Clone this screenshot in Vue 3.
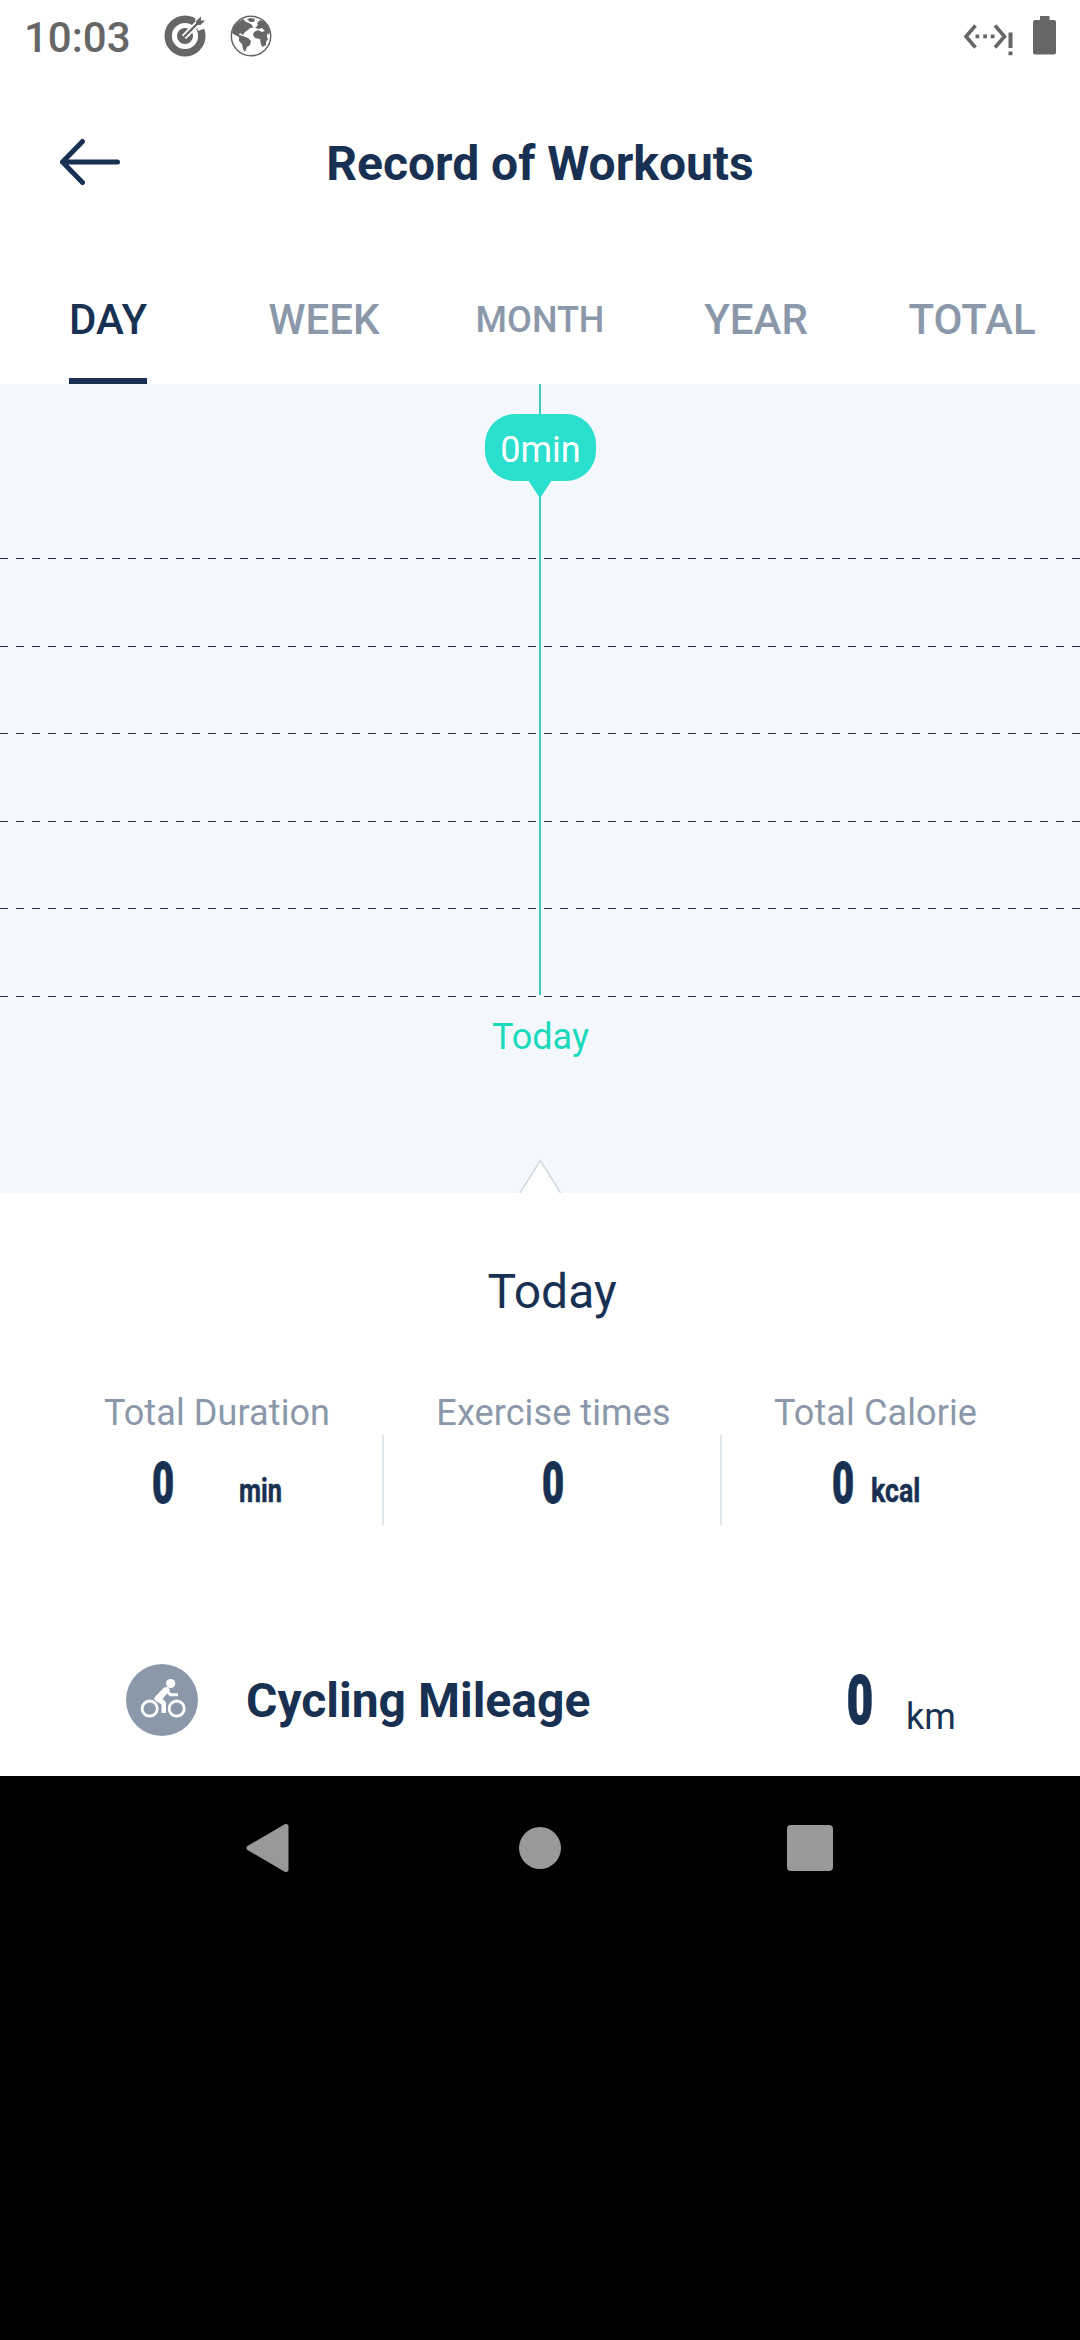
<script setup>
const tabs = ['DAY', 'WEEK', 'MONTH', 'YEAR', 'TOTAL']
const stats = [
  { key: 'duration', label: 'Total Duration', value: '0', unit: 'min' },
  { key: 'times', label: 'Exercise times', value: '0', unit: '' },
  { key: 'calorie', label: 'Total Calorie', value: '0', unit: 'kcal' },
]
</script>

<template>
  <div class="screen">
    <div class="status">
      <span class="clock">10:03</span>
      <svg class="target" width="42" height="42" viewBox="0 0 42 42">
        <circle cx="21" cy="21" r="16.8" fill="none" stroke="#666" stroke-width="7.4" />
        <circle cx="21" cy="21" r="8" fill="#666" />
        <path d="M20 22 35 7" stroke="#fff" stroke-width="6" />
        <path d="M31 4 42 0V13L34 16Z" fill="#fff" />
        <path d="M20 22 34 8" stroke="#666" stroke-width="2.4" />
        <path d="M32 10V6L37 1.500V5.500H41L36.500 10Z" fill="#666" />
      </svg>
      <svg class="globe" width="42" height="42" viewBox="0 0 42 42">
        <circle cx="21" cy="21" r="19.7" fill="#fff" stroke="#666" stroke-width="1.500" />
        <path fill="#666" d="M2 18 4 11 8 7 13 4 16 7 19 8 22 10 23 13 20 13 18 15 15 17 13 20 10 18 9 20 13 21 18 23 21 26 20 30 17 32 15 37 13 34 12 29 9 26 9 22 5 20ZM17 4 21 3 25 4 24 7 20 7ZM27 8 30 5 35 7 38 12 40 17 38 20 37 18 37 22 38 24 36 27 36 30 33 32 31 30 30 24 25 23 23 20 24 17 28 15 32 17 35 16 32 13 29 14 25 13 28 10Z" />
      </svg>
      <div class="grow"></div>
      <svg class="net" width="50" height="40" viewBox="0 0 50 40">
        <g fill="none" stroke="#666" stroke-width="3.600">
          <path d="M12.500 9.500 3 20.500 12.500 31.500M32 9.500 41.500 20.500 32 31.500" />
        </g>
        <path fill="#666" d="M12.500 18.500h3.800v3.800h-3.800ZM20.200 18.500h3.800v3.800h-3.800ZM27.800 18.500h3.800v3.800h-3.800ZM45.500 16.500h4v15.500h-4ZM45.500 35.500h4v3.800h-4Z" />
      </svg>
      <svg class="battery" width="23" height="39" viewBox="0 0 23 39">
        <path fill="#666" d="M7 0h9.500v4H21a2 2 0 0 1 2 2v30.500a2 2 0 0 1-2 2H2a2 2 0 0 1-2-2V6a2 2 0 0 1 2-2h5Z" />
      </svg>
    </div>

    <header class="header">
      <svg class="back" width="62" height="50" viewBox="0 0 62 50">
        <path d="M22.500 4.500 2.500 25 22.500 45.500M2.500 25H57.500" fill="none" stroke="#183153" stroke-width="5" stroke-linecap="round" />
      </svg>
      <h1><span class="title">Record of Workouts</span></h1>
      <div class="back-balance"></div>
    </header>

    <nav class="tabs">
      <div v-for="t in tabs" :key="t" class="tab" :class="{ active: t === 'DAY', small: t === 'MONTH' }">
        <span>{{ t }}</span>
      </div>
    </nav>

    <section class="chart">
      <div class="grid">
        <i v-for="n in 6" :key="n" class="gridline"></i>
      </div>
      <div class="day">Today</div>
      <div class="cursor"></div>
      <div class="bubble"><span>0min</span></div>
      <svg class="tail" width="24" height="18" viewBox="0 0 24 18"><path d="M0 0H24L12.500 17.500H11.500Z" fill="#2adfcd" /></svg>
      <svg class="notch" width="44" height="35" viewBox="0 0 44 35">
        <path d="M2 35 22.300 2.500 42.600 35" fill="#fff" stroke="#d3d8e2" stroke-width="1.500" />
      </svg>
    </section>

    <section class="summary">
      <h2>Today</h2>
      <div class="stats">
        <div v-for="s in stats" :key="s.key" class="stat" :class="s.key">
          <div class="label">{{ s.label }}</div>
          <div class="figures">
            <span class="num">{{ s.value }}</span>
            <span v-if="s.unit" class="unit"><b>{{ s.unit }}</b></span>
          </div>
        </div>
      </div>
      <div class="mileage">
        <svg width="72" height="72" viewBox="0 0 72 72">
          <circle cx="36" cy="36" r="36" fill="#8b98aa" />
          <g fill="none" stroke="#fff" stroke-width="2.800">
            <circle cx="23.700" cy="44.600" r="7.600" />
            <circle cx="50.700" cy="44.600" r="7.600" />
            <path d="M42 25 31.500 35.500 37.500 39.500V49" stroke-width="4" stroke-linejoin="round" />
            <path d="M39 25 44.500 30.800H52" stroke-width="3" />
          </g>
          <path fill="#fff" d="M38 23.500 42 23 44 26 39 32 36.500 35 40 38V49H36V40L29 36.500 28 34Z" />
          <circle cx="44.700" cy="19.500" r="4.600" fill="#fff" />
        </svg>
        <span class="name">Cycling Mileage</span>
        <span class="km-num">0</span>
        <span class="km">km</span>
      </div>
    </section>

    <footer class="navbar">
      <svg width="216" height="60" viewBox="0 0 216 60"><path d="M124 8.500 87 30 124 51.500Z" class="nav-tri" /></svg>
      <svg width="216" height="60" viewBox="0 0 216 60"><circle cx="108" cy="30" r="21" fill="#999" /></svg>
      <svg width="216" height="60" viewBox="0 0 216 60"><rect x="85" y="7" width="46" height="46" rx="4" fill="#999" /></svg>
    </footer>
  </div>
</template>

<style>
body {
  margin: 0;
  background: #000;
}
</style>

<style scoped>
.screen {
  width: 1080px;
  height: 2340px;
  display: flex;
  flex-direction: column;
  overflow: hidden;
  background: #000;
  color: #183153;
  font-family: Roboto, sans-serif;
}
svg {
  display: block;
  flex: none;
}
.status {
  height: 72px;
  box-sizing: border-box;
  display: flex;
  align-items: flex-start;
  padding: 0 24px 0 24px;
  background: #fff;
}
.clock {
  width: 140px;
  line-height: 75px;
  font-size: 42px;
  font-weight: 500;
  color: #666;
}
.target { margin-top: 15px; }
.globe { margin: 15px 0 0 24px; }
.grow { flex: 1; }
.net { margin: 16px 20px 0 0; }
.battery { margin-top: 16px; }
.header {
  height: 183px;
  display: flex;
  align-items: center;
  background: #fff;
}
.back { margin: 0 98px 3px 60px; }
.back-balance { width: 220px; }
h1 {
  flex: 1;
  margin: 0;
  text-align: center;
  font-size: 48px;
  font-weight: 700;
  white-space: nowrap;
}
.tabs {
  height: 129px;
  display: grid;
  grid-template-columns: repeat(5, 216px);
  background: #fff;
}
.tab {
  display: flex;
  justify-content: center;
  font-size: 42px;
  font-weight: 500;
  line-height: 129px;
  color: #8b98aa;
}
.small {
  font-size: 36px;
  line-height: 131px;
}
.active { color: #183153; }
.active span {
  height: 123px;
  border-bottom: 6px solid #183153;
}
.chart {
  position: relative;
  height: 809px;
  box-sizing: border-box;
  padding-top: 174px;
  background: #f4f7fe;
}
.grid {
  height: 439px;
  display: flex;
  flex-direction: column;
  justify-content: space-between;
}
.gridline {
  height: 1px;
  background: repeating-linear-gradient(90deg, #292c45 0 8px, transparent 8px 16px);
}
.day {
  margin-top: 14px;
  padding-left: 1px;
  text-align: center;
  font-size: 36px;
  line-height: 52px;
  color: #1bdabb;
}
.cursor {
  position: absolute;
  left: 539px;
  top: 0;
  width: 2px;
  height: 611px;
  background: #3ccabf;
}
.bubble {
  position: absolute;
  left: 485px;
  top: 30px;
  width: 111px;
  height: 67px;
  border-radius: 30px;
  background: #2adfcd;
  color: #fff;
  text-align: center;
  font-size: 36px;
  line-height: 73px;
}
.tail {
  position: absolute;
  left: 528px;
  top: 96px;
}
.notch {
  position: absolute;
  left: 518px;
  top: 774px;
}
.summary {
  height: 583px;
  box-sizing: border-box;
  padding-top: 68px;
  background: #fff;
}
h2 {
  margin: 0 0 0 24px;
  text-align: center;
  font-size: 48px;
  font-weight: 400;
  line-height: 62px;
}
.stats {
  display: grid;
  grid-template-columns: 338px 338px 311px;
  margin: 62px 0 0 46px;
}
.stat {
  height: 140px;
  background: linear-gradient(#e0e7ec, #e0e7ec) right 50px / 2px 90px no-repeat;
}
.calorie { background: none; }
.label {
  text-align: center;
  font-size: 36px;
  line-height: 56px;
  letter-spacing: 0.1px;
  color: #8b98aa;
}
.duration .label { padding-left: 4px; }
.times .label { padding-left: 1px; }
.calorie .label { padding-right: 4px; }
.figures {
  display: flex;
  height: 84px;
}
.num {
  width: 24px;
  display: flex;
  justify-content: center;
  margin-left: 105px;
  font-size: 57px;
  font-weight: 900;
  line-height: 85px;
  -webkit-text-stroke: 0.8px currentColor;
  transform: scaleX(0.67);
}
.times .num { margin-left: 157px; }
.calorie .num { margin-left: 109px; }
.unit {
  margin-left: 64px;
  font-size: 33px;
  line-height: 99px;
  -webkit-text-stroke: 0.5px currentColor;
}
.calorie .unit { margin-left: 16px; }
.unit b {
  display: block;
  transform: scaleX(0.77);
  transform-origin: left;
}
.calorie .unit b { transform: scaleX(0.81); }
.mileage {
  display: flex;
  align-items: center;
  height: 72px;
  margin: 138px 0 0 126px;
  padding-top: 2px;
}
.mileage svg { margin-bottom: 2px; }
.name {
  width: 599px;
  margin-left: 48px;
  font-size: 48px;
  font-weight: 700;
  line-height: 72px;
}
.km-num {
  width: 30px;
  display: flex;
  justify-content: center;
  font-size: 68px;
  font-weight: 900;
  line-height: 72px;
  -webkit-text-stroke: 1px currentColor;
  transform: scaleX(0.67);
}
.km {
  margin: 31px 0 0 31px;
  font-size: 36px;
}
.navbar {
  display: flex;
  justify-content: center;
  gap: 54px;
  padding-top: 42px;
}
.nav-tri {
  fill: #999;
  stroke: #999;
  stroke-width: 5;
  stroke-linejoin: round;
}
</style>
